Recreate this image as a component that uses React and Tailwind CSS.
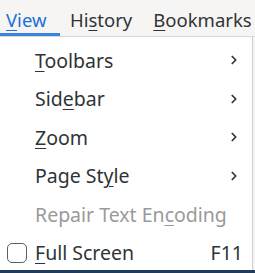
import { ChevronRight } from 'lucide-react';

const items = [
  { pre: '', key: 'T', post: 'oolbars', sub: true },
  { pre: 'Sid', key: 'e', post: 'bar', sub: true },
  { pre: '', key: 'Z', post: 'oom', sub: true },
  { pre: 'Page St', key: 'y', post: 'le', sub: true },
  { pre: 'Repair Text En', key: 'c', post: 'oding', disabled: true },
  { pre: '', key: 'F', post: 'ull Screen', check: true, shortcut: 'F11' },
];

function Label({ pre, k, post }) {
  return (
    <span>
      {pre}
      <span className="underline underline-offset-[3px] decoration-1">{k}</span>
      {post}
    </span>
  );
}

function App() {
  return (
    <div
      className="w-[255px] h-[273px] overflow-hidden bg-[#f6f5f4] text-[#2e3436]"
      style={{ fontFamily: '"Noto Sans", "DejaVu Sans", sans-serif' }}
    >
      {/* menubar */}
      <div className="h-[37px] flex items-start border-b border-[#d8d8d8] whitespace-nowrap text-[18.5px]">
        <div className="w-[60px] h-[36px] flex flex-col">
          <div className="h-[33px] flex items-center pt-[6px] pl-[6px] text-[#1c71d8]">
            <Label pre="" k="V" post="iew" />
          </div>
          <div className="h-[3px] bg-[#3584e4]" />
        </div>
        <div className="h-[33px] flex items-center pt-[6px] ml-[10px]">
          <Label pre="Hi" k="s" post="tory" />
        </div>
        <div className="h-[33px] flex items-center pt-[6px] ml-[21px]">
          <Label pre="" k="B" post="ookmarks" />
        </div>
      </div>

      {/* popup */}
      <div className="w-[253px] h-[233px] bg-white border-r border-[#d0d0d0] pt-[4px] text-[19.5px]">
        {items.map((it, i) => (
          <div key={i} className="h-[38.5px] flex items-center pr-[11px]">
            <div className="w-[35px] flex items-center pl-[7px]">
              {it.check && (
                <div className="w-[20px] h-[20px] rounded-[5px] border-[1.5px] border-[#5e5e5e]" />
              )}
            </div>
            <div className={`flex-1 ${it.disabled ? 'text-[#9a9a9a]' : ''}`}>
              <Label pre={it.pre} k={it.key} post={it.post} />
            </div>
            {it.sub && <ChevronRight size={14} strokeWidth={3} className="text-[#2e3436]" />}
            {it.shortcut && <span className="mr-[-2px]">{it.shortcut}</span>}
          </div>
        ))}
      </div>
      <div className="h-[3px] bg-[#1f3b5c]" />
    </div>
  );
}

export default App;
